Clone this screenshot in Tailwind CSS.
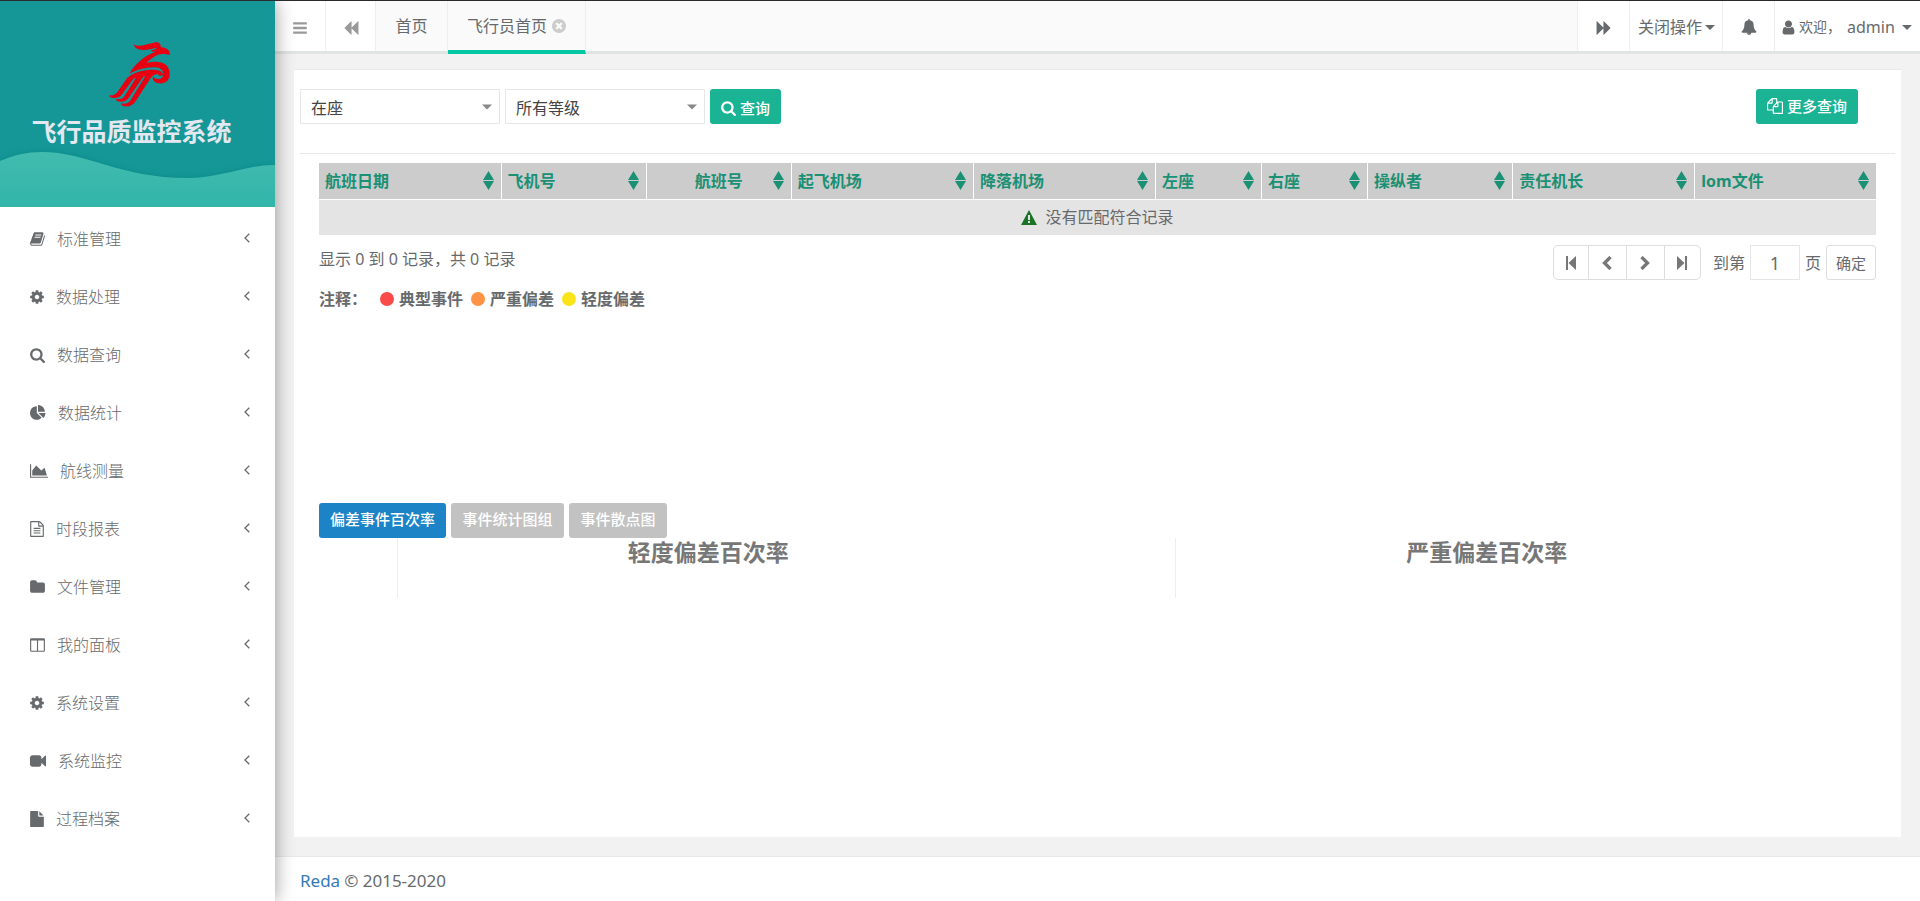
<!DOCTYPE html>
<html lang="zh-CN">
<head>
<meta charset="utf-8">
<meta name="viewport" content="width=device-width, initial-scale=1">
<title>飞行品质监控系统</title>
<script src="https://cdn.jsdelivr.net/npm/@tailwindcss/browser@4"></script>
</head>
<body class="flex min-h-screen border-t border-[#2a2a2e] bg-[#f2f2f2] font-['Noto_Sans','Noto_Sans_CJK_SC',sans-serif] text-base leading-6 text-[#676a6c]">

<svg class="hidden" aria-hidden="true">
  <symbol id="bars" viewBox="0 0 1792 1792"><path d="M1664 1344v128q0 26-19 45t-45 19h-1408q-26 0-45-19t-19-45v-128q0-26 19-45t45-19h1408q26 0 45 19t19 45zm0-512v128q0 26-19 45t-45 19h-1408q-26 0-45-19t-19-45v-128q0-26 19-45t45-19h1408q26 0 45 19t19 45zm0-512v128q0 26-19 45t-45 19h-1408q-26 0-45-19t-19-45v-128q0-26 19-45t45-19h1408q26 0 45 19t19 45z"/></symbol>
  <symbol id="backward" viewBox="0 0 1792 1792"><path d="M1683 141q19-19 32-13t13 32v1472q0 26-13 32t-32-13l-710-710q-9-9-13-19v710q0 26-13 32t-32-13l-710-710q-19-19-19-45t19-45l710-710q19-19 32-13t13 32v710q4-10 13-19z"/></symbol>
  <symbol id="book" viewBox="64 0 1664 1792"><path d="M1703 478q40 57 18 129l-275 906q-19 64-76.5 107.5t-122.5 43.5h-923q-77 0-148.5-53.5t-99.5-131.5q-24-67-2-127 0-4 3-27t4-37q1-8-3-21.5t-3-19.5q2-11 8-21t16.5-23.5 16.5-23.5q23-38 45-91.5t30-91.5q3-10 .5-30t-.5-28q3-11 17-28t17-23q21-36 42-92t25-90q1-9-2.5-32t.5-28q4-13 22-30.5t22-22.5q19-26 42.5-84.5t27.5-96.5q1-8-3-25.5t-2-26.5q2-8 9-18t18-23 17-21q8-12 16.5-30.5t15-35 16-36 19.5-32 26.5-23.5 36-11.5 47.5 5.5l-1 3q38-9 51-9h761q74 0 114 56t18 130l-274 906q-36 119-71.5 153.5t-128.5 34.5h-869q-27 0-38 15-11 16-1 43 24 70 144 70h923q29 0 56-15.5t35-41.5l300-987q7-22 5-57 38 15 59 43zm-1064 2q-4 13 2 22.5t20 9.5h608q13 0 25.5-9.5t16.5-22.5l21-64q4-13-2-22.5t-20-9.5h-608q-13 0-25.5 9.5t-16.5 22.5zm-83 256q-4 13 2 22.5t20 9.5h608q13 0 25.5-9.5t16.5-22.5l21-64q4-13-2-22.5t-20-9.5h-608q-13 0-25.5 9.5t-16.5 22.5z"/></symbol>
  <symbol id="cog" viewBox="128 0 1536 1792"><path d="M1152 896q0-106-75-181t-181-75-181 75-75 181 75 181 181 75 181-75 75-181zm512-109v222q0 12-8 23t-20 13l-185 28q-19 54-39 91 35 50 107 138 10 12 10 25t-9 23q-27 37-99 108t-94 71q-12 0-26-9l-138-108q-44 23-91 38-16 136-29 186-7 28-36 28h-222q-14 0-24.5-8.5t-11.5-21.5l-28-184q-49-16-90-37l-141 107q-10 9-25 9-14 0-25-11-126-114-165-168-7-10-7-23 0-12 8-23 15-21 51-66.5t54-70.5q-27-50-41-99l-183-27q-13-2-21-12.5t-8-23.5v-222q0-12 8-23t19-13l186-28q14-46 39-92-40-57-107-138-10-12-10-24 0-10 9-23 26-36 98.5-107.5t94.5-71.5q13 0 26 10l138 107q44-23 91-38 16-136 29-186 7-28 36-28h222q14 0 24.5 8.5t11.5 21.5l28 184q49 16 90 37l142-107q9-9 24-9 13 0 25 10 129 119 165 170 7 8 7 22 0 12-8 23-15 21-51 66.5t-54 70.5q26 50 41 98l183 28q13 2 21 12.5t8 23.5z"/></symbol>
  <symbol id="search" viewBox="64 0 1664 1792"><path d="M1216 832q0-185-131.5-316.5t-316.5-131.5-316.5 131.5-131.5 316.5 131.5 316.5 316.5 131.5 316.5-131.5 131.5-316.5zm512 832q0 52-38 90t-90 38q-54 0-90-38l-343-342q-179 124-399 124-143 0-273.5-55.5t-225-150-150-225-55.5-273.5 55.5-273.5 150-225 225-150 273.5-55.5 273.5 55.5 225 150 150 225 55.5 273.5q0 220-124 399l343 343q37 37 37 90z"/></symbol>
  <symbol id="pie" viewBox="0 0 1792 1792"><path d="M768 890l546 546q-106 108-247.5 168t-298.5 60q-209 0-385.5-103t-279.5-279.5-103-385.5 103-385.5 279.5-279.5 385.5-103v762zm187 6h773q0 157-60 298.5t-168 247.5zm709-128h-768v-768q209 0 385.5 103t279.5 279.5 103 385.5z"/></symbol>
  <symbol id="area" viewBox="0 0 2048 1792"><path d="M2048 1536v128h-2048v-1536h128v1408h1920zm-384-1024l256 896h-1664v-576l448-576 576 576z"/></symbol>
  <symbol id="filetext" viewBox="128 0 1536 1792"><path d="M1596 380q28 28 48 76t20 88v1152q0 40-28 68t-68 28h-1344q-40 0-68-28t-28-68v-1600q0-40 28-68t68-28h896q40 0 88 20t76 48zm-444-244v376h376q-10-29-22-41l-313-313q-12-12-41-22zm384 1528v-1024h-416q-40 0-68-28t-28-68v-416h-768v1536h1280zm-1024-864q0-14 9-23t23-9h704q14 0 23 9t9 23v64q0 14-9 23t-23 9h-704q-14 0-23-9t-9-23v-64zm736 224q14 0 23 9t9 23v64q0 14-9 23t-23 9h-704q-14 0-23-9t-9-23v-64q0-14 9-23t23-9h704zm0 256q14 0 23 9t9 23v64q0 14-9 23t-23 9h-704q-14 0-23-9t-9-23v-64q0-14 9-23t23-9h704z"/></symbol>
  <symbol id="folder" viewBox="64 0 1664 1792"><path d="M1728 608v704q0 92-66 158t-158 66h-1216q-92 0-158-66t-66-158v-960q0-92 66-158t158-66h320q92 0 158 66t66 158v32h672q92 0 158 66t66 158z"/></symbol>
  <symbol id="columns" viewBox="64 0 1664 1792"><path d="M224 1536h608v-1152h-640v1120q0 13 9.5 22.5t22.5 9.5zm1376-32v-1120h-640v1152h608q13 0 22.5-9.5t9.5-22.5zm128-1216v1216q0 66-47 113t-113 47h-1344q-66 0-113-47t-47-113v-1216q0-66 47-113t113-47h1344q66 0 113 47t47 113z"/></symbol>
  <symbol id="video" viewBox="0 0 1792 1792"><path d="M1792 352v1088q0 42-39 59-13 5-25 5-27 0-45-19l-403-403v166q0 119-84.5 203.5t-203.5 84.5h-704q-119 0-203.5-84.5t-84.5-203.5v-704q0-119 84.5-203.5t203.5-84.5h704q119 0 203.5 84.5t84.5 203.5v165l403-402q18-19 45-19 12 0 25 5 39 17 39 59z"/></symbol>
  <symbol id="file" viewBox="128 0 1536 1792"><path d="M1152 512v-472q22 14 36 28l408 408q14 14 28 36h-472zm-128 32q0 40 28 68t68 28h544v1056q0 40-28 68t-68 28h-1344q-40 0-68-28t-28-68v-1600q0-40 28-68t68-28h800v544z"/></symbol>
  <symbol id="bell" viewBox="0 0 1792 1792"><path d="M912 1696q0-16-16-16-59 0-101.5-42.5t-42.5-101.5q0-16-16-16t-16 16q0 73 51.5 124.5t124.5 51.5q16 0 16-16zm816-288q0 52-38 90t-90 38h-448q0 106-75 181t-181 75-181-75-75-181h-448q-52 0-90-38t-38-90q50-42 91-88t85-119.5 74.5-158.5 50-206 19.5-260q0-152 117-282.5t307-158.5q-8-19-8-39 0-40 28-68t68-28 68 28 28 68q0 20-8 39 190 28 307 158.5t117 282.5q0 139 19.5 260t50 206 74.5 158.5 85 119.5 91 88z"/></symbol>
  <symbol id="user" viewBox="192 0 1408 1792"><path d="M1536 1399q0 109-62.5 187t-150.5 78h-854q-88 0-150.5-78t-62.5-187q0-85 8.5-160.5t31.5-152 58.5-131 94-89 134.5-34.5q131 128 313 128t313-128q76 0 134.5 34.5t94 89 58.5 131 31.5 152 8.5 160.5zm-256-887q0 159-112.5 271.5t-271.5 112.5-271.5-112.5-112.5-271.5 112.5-271.5 271.5-112.5 271.5 112.5 112.5 271.5z"/></symbol>
  <symbol id="close" viewBox="128 128 1536 1536"><path d="M1277 1122q0-26-19-45l-181-181 181-181q19-19 19-45 0-27-19-46l-90-90q-19-19-46-19-26 0-45 19l-181 181-181-181q-19-19-45-19-27 0-46 19l-90 90q-19 19-19 46 0 26 19 45l181 181-181 181q-19 19-19 45 0 27 19 46l90 90q19 19 46 19 26 0 45-19l181-181 181 181q19 19 45 19 27 0 46-19l90-90q19-19 19-46zm387-226q0 209-103 385.5t-279.5 279.5-385.5 103-385.5-103-279.5-279.5-103-385.5 103-385.5 279.5-279.5 385.5-103 385.5 103 279.5 279.5 103 385.5z"/></symbol>
  <symbol id="files" viewBox="0 0 1792 1792"><path d="M1696 384q40 0 68 28t28 68v1216q0 40-28 68t-68 28h-960q-40 0-68-28t-28-68v-288h-544q-40 0-68-28t-28-68v-672q0-40 20-88t48-76l408-408q28-28 76-48t88-20h416q40 0 68 28t28 68v328q68-40 128-40h416zm-544 213l-299 299h299v-299zm-640-384l-299 299h299v-299zm196 647l316-316v-416h-384v416q0 40-28 68t-68 28h-416v640h512v-256q0-40 20-88t48-76zm956 804v-1152h-384v416q0 40-28 68t-68 28h-416v640h896z"/></symbol>
  <symbol id="caret" viewBox="0 0 10 5"><path d="M0 0h10L5 5z"/></symbol>
  <symbol id="left" viewBox="0 0 6 10"><path d="M5.300 .8L1 5l4.300 4.200" fill="none" stroke="currentColor" stroke-width="1.300"/></symbol>
  <symbol id="sort" viewBox="0 0 11 19"><path d="M5.500 0l5.500 9H0zM5.500 19l5.500-9H0z"/></symbol>
  <symbol id="chev" viewBox="0 0 10 14"><path d="M8.500 1L2.500 7l6 6" fill="none" stroke="currentColor" stroke-width="3.300"/></symbol>
  <symbol id="first" viewBox="0 0 10 14"><path d="M0 0h2v14H0zM10 0v14L2.500 7z"/></symbol>
</svg>

<aside class="relative z-10 w-[275px] shrink-0 bg-white shadow-[0_0_18px_rgba(0,0,0,0.4)]">
  <div class="relative h-[206px] overflow-hidden bg-[#159797]">
    <svg class="absolute inset-0 size-full" viewBox="0 0 275 206" preserveAspectRatio="none" aria-hidden="true">
      <defs>
        <linearGradient id="wave" x1="0" y1="0" x2="0" y2="1"><stop offset="0" stop-color="#41bbae"/><stop offset="1" stop-color="#33b5aa"/></linearGradient>
        <filter id="soft" x="-10%" y="-30%" width="120%" height="160%"><feGaussianBlur stdDeviation="3"/></filter>
      </defs>
      <path d="M0 160C14 154 27 151 42 151C87 151 120 177 187 177C221 177 250 163 275 164V206H0z" fill="#0b7f80" opacity=".55" filter="url(#soft)"/>
      <path d="M0 160C14 154 27 151 42 151C87 151 120 177 187 177C221 177 250 163 275 164V206H0z" fill="url(#wave)"/>
    </svg>
    <div class="relative flex flex-col items-center pt-10 pr-3">
      <svg class="ml-4 h-[66px] w-[62px]" viewBox="321 122 186 198" role="img" aria-label="标志">
        <path fill="#e60012" d="M395 132C410 142 430 133 460 126C470 124 478 131 476 141C490 141 504 147 504 164C494 161 480 159 468 163C455 167 443 178 434 188C450 183 470 183 484 189C500 196 506 214 502 230C498 246 482 252 467 248C456 245 450 237 453 229C461 238 476 238 482 229C488 218 482 206 468 202C440 198 405 208 383 220C393 198 425 166 464 153C456 156 449 154 447 149C455 150 460 148 465 142C442 146 404 160 395 132Z"/>
        <path fill="#e60012" d="M376 232C400 212 440 206 463 209C476 211 484 217 483 223C480 229 466 226 468 220C456 222 450 226 444 236L402 301C394 313 382 320 366 318C360 317 357 313 358 309C370 312 380 308 386 299L430 228L424 229L380 293C372 304 360 306 346 303C342 301 341 298 343 296C354 298 362 295 368 286L402 232L394 235L359 283C352 293 337 295 325 291C321 289 322 285 325 285C337 287 344 279 350 270Z"/>
      </svg>
      <h1 class="mt-1 text-[25px] leading-10 font-bold text-[#e2e7f0]">飞行品质监控系统</h1>
    </div>
  </div>
  <nav class="flex flex-col pt-[3px] font-light" aria-label="主菜单">
    <a href="#" class="flex h-[58px] items-center px-[30px]"><svg class="h-4 w-[15px] fill-current"><use href="#book"/></svg><span class="ml-3">标准管理</span><svg class="mb-[2px] ml-auto h-[10px] w-[6px] fill-current -mr-[5px]"><use href="#left"/></svg></a>
    <a href="#" class="flex h-[58px] items-center px-[30px]"><svg class="h-4 w-[14px] fill-current"><use href="#cog"/></svg><span class="ml-3">数据处理</span><svg class="mb-[2px] ml-auto h-[10px] w-[6px] fill-current -mr-[5px]"><use href="#left"/></svg></a>
    <a href="#" class="flex h-[58px] items-center px-[30px]"><svg class="h-4 w-[15px] fill-current"><use href="#search"/></svg><span class="ml-3">数据查询</span><svg class="mb-[2px] ml-auto h-[10px] w-[6px] fill-current -mr-[5px]"><use href="#left"/></svg></a>
    <a href="#" class="flex h-[58px] items-center px-[30px]"><svg class="h-4 w-4 fill-current"><use href="#pie"/></svg><span class="ml-3">数据统计</span><svg class="mb-[2px] ml-auto h-[10px] w-[6px] fill-current -mr-[5px]"><use href="#left"/></svg></a>
    <a href="#" class="flex h-[58px] items-center px-[30px]"><svg class="h-4 w-[18px] fill-current"><use href="#area"/></svg><span class="ml-3">航线测量</span><svg class="mb-[2px] ml-auto h-[10px] w-[6px] fill-current -mr-[5px]"><use href="#left"/></svg></a>
    <a href="#" class="flex h-[58px] items-center px-[30px]"><svg class="h-4 w-[14px] fill-current"><use href="#filetext"/></svg><span class="ml-3">时段报表</span><svg class="mb-[2px] ml-auto h-[10px] w-[6px] fill-current -mr-[5px]"><use href="#left"/></svg></a>
    <a href="#" class="flex h-[58px] items-center px-[30px]"><svg class="h-4 w-[15px] fill-current"><use href="#folder"/></svg><span class="ml-3">文件管理</span><svg class="mb-[2px] ml-auto h-[10px] w-[6px] fill-current -mr-[5px]"><use href="#left"/></svg></a>
    <a href="#" class="flex h-[58px] items-center px-[30px]"><svg class="h-4 w-[15px] fill-current"><use href="#columns"/></svg><span class="ml-3">我的面板</span><svg class="mb-[2px] ml-auto h-[10px] w-[6px] fill-current -mr-[5px]"><use href="#left"/></svg></a>
    <a href="#" class="flex h-[58px] items-center px-[30px]"><svg class="h-4 w-[14px] fill-current"><use href="#cog"/></svg><span class="ml-3">系统设置</span><svg class="mb-[2px] ml-auto h-[10px] w-[6px] fill-current -mr-[5px]"><use href="#left"/></svg></a>
    <a href="#" class="flex h-[58px] items-center px-[30px]"><svg class="h-4 w-4 fill-current"><use href="#video"/></svg><span class="ml-3">系统监控</span><svg class="mb-[2px] ml-auto h-[10px] w-[6px] fill-current -mr-[5px]"><use href="#left"/></svg></a>
    <a href="#" class="flex h-[58px] items-center px-[30px]"><svg class="h-4 w-[14px] fill-current"><use href="#file"/></svg><span class="ml-3">过程档案</span><svg class="mb-[2px] ml-auto h-[10px] w-[6px] fill-current -mr-[5px]"><use href="#left"/></svg></a>
  </nav>
</aside>

<div class="flex min-w-0 flex-1 flex-col">
  <header class="flex h-[53px] border-b-3 border-[#e0e5e3] bg-[#fafafa]">
    <button type="button" aria-label="菜单" class="flex w-[51px] items-center justify-center border-r border-[#eee] bg-white pt-1 text-[#999]"><svg class="size-4 fill-current"><use href="#bars"/></svg></button>
    <button type="button" aria-label="向左" class="flex w-[50px] items-center justify-center border-r border-[#eee] bg-white pt-1 text-[#999]"><svg class="size-4 fill-current"><use href="#backward"/></svg></button>
    <a href="#" class="flex w-[72px] items-center justify-center border-r border-[#eee]">首页</a>
    <div class="-mb-[3px] flex w-[138px] items-center justify-center gap-[5px] border-r border-b-4 border-r-[#eee] border-b-[#04c8a4]"><a href="#">飞行员首页</a><button type="button" aria-label="关闭" class="text-[#ccc]"><svg class="size-[14px] fill-current"><use href="#close"/></svg></button></div>
    <div class="ml-auto flex bg-white">
      <button type="button" aria-label="向右" class="flex w-[52px] items-center justify-center border-l border-[#eee] pt-1 pr-2"><svg class="ml-2 size-4 -scale-x-100 fill-current"><use href="#backward"/></svg></button>
      <button type="button" class="flex w-[93px] items-center gap-[3px] border-l border-[#eee] pt-[2px] pl-2">关闭操作<svg class="h-[5px] w-[10px] fill-current"><use href="#caret"/></svg></button>
      <button type="button" aria-label="通知" class="flex w-[52px] items-center justify-center border-l border-[#eee] pt-[2px]"><svg class="size-4 fill-current"><use href="#bell"/></svg></button>
      <button type="button" class="flex w-[146px] items-center border-l border-[#eee] pt-[2px] pl-[7px]"><svg class="h-[17px] w-[13px] fill-current"><use href="#user"/></svg><span class="ml-1 text-sm">欢迎，</span><span class="ml-[6px]">admin</span><svg class="ml-[7px] h-[5px] w-[10px] fill-current"><use href="#caret"/></svg></button>
    </div>
  </header>

  <main class="mx-[19px] mt-[15px] flex-1 border-t border-[#e7eaec] bg-white">
    <form class="mx-[6px] flex h-[84px] items-start gap-[5px] border-b border-[#e7eaec] pt-[19px]">
      <div class="relative w-[200px]">
        <select aria-label="座位" class="h-[35px] w-full appearance-none rounded-[1px] border border-[#e5e6e7] bg-white pt-[2px] pl-[10px] text-[#444]"><option>在座</option></select>
        <svg class="pointer-events-none absolute top-[15px] right-2 h-[6px] w-[10px] fill-[#888]"><use href="#caret"/></svg>
      </div>
      <div class="relative w-[200px]">
        <select aria-label="等级" class="h-[35px] w-full appearance-none rounded-[1px] border border-[#e5e6e7] bg-white pt-[2px] pl-[10px] text-[#444]"><option>所有等级</option></select>
        <svg class="pointer-events-none absolute top-[15px] right-2 h-[6px] w-[10px] fill-[#888]"><use href="#caret"/></svg>
      </div>
      <button type="submit" class="flex h-[35px] w-[71px] items-center justify-center gap-1 rounded-[3px] bg-[#1ab394] pt-[2px] text-[15px] font-medium text-white"><svg class="h-4 w-[15px] fill-current"><use href="#search"/></svg>查询</button>
      <button type="button" class="mr-[37px] ml-auto flex h-[35px] w-[102px] items-center justify-center gap-1 rounded-[3px] bg-[#1ab394] pb-[2px] text-[15px] font-medium text-white"><svg class="size-4 fill-current"><use href="#files"/></svg>更多查询</button>
    </form>

    <section class="mx-[25px] pt-[9px]">
      <div class="min-h-[340px]">
        <table class="w-full table-fixed border-collapse">
          <colgroup><col class="w-[182px]"><col class="w-[145px]"><col class="w-[145px]"><col class="w-[182px]"><col class="w-[182px]"><col class="w-[106px]"><col class="w-[106px]"><col class="w-[145px]"><col class="w-[182px]"><col class="w-[181px]"></colgroup>
          <thead>
            <tr class="h-9 border-b border-white bg-[#ccc] text-left text-[#1a9074]">
              <th class="border-r border-white pr-[7px] pl-[6px]"><div class="flex items-center justify-between">航班日期<svg class="h-[19px] w-[11px] fill-current"><use href="#sort"/></svg></div></th>
              <th class="border-r border-white pr-[7px] pl-[6px]"><div class="flex items-center justify-between">飞机号<svg class="h-[19px] w-[11px] fill-current"><use href="#sort"/></svg></div></th>
              <th class="border-r border-white pr-[7px] pl-[6px]"><div class="flex items-center"><span class="flex-1 pl-3 text-center">航班号</span><svg class="h-[19px] w-[11px] fill-current"><use href="#sort"/></svg></div></th>
              <th class="border-r border-white pr-[7px] pl-[6px]"><div class="flex items-center justify-between">起飞机场<svg class="h-[19px] w-[11px] fill-current"><use href="#sort"/></svg></div></th>
              <th class="border-r border-white pr-[7px] pl-[6px]"><div class="flex items-center justify-between">降落机场<svg class="h-[19px] w-[11px] fill-current"><use href="#sort"/></svg></div></th>
              <th class="border-r border-white pr-[7px] pl-[6px]"><div class="flex items-center justify-between">左座<svg class="h-[19px] w-[11px] fill-current"><use href="#sort"/></svg></div></th>
              <th class="border-r border-white pr-[7px] pl-[6px]"><div class="flex items-center justify-between">右座<svg class="h-[19px] w-[11px] fill-current"><use href="#sort"/></svg></div></th>
              <th class="border-r border-white pr-[7px] pl-[6px]"><div class="flex items-center justify-between">操纵者<svg class="h-[19px] w-[11px] fill-current"><use href="#sort"/></svg></div></th>
              <th class="border-r border-white pr-[7px] pl-[6px]"><div class="flex items-center justify-between">责任机长<svg class="h-[19px] w-[11px] fill-current"><use href="#sort"/></svg></div></th>
              <th class="pr-[7px] pl-[6px]"><div class="flex items-center justify-between">lom文件<svg class="h-[19px] w-[11px] fill-current"><use href="#sort"/></svg></div></th>
            </tr>
          </thead>
          <tbody>
            <tr class="h-9 bg-[#e4e4e4]"><td colspan="10"><div class="flex items-center justify-center gap-2"><svg class="h-[15px] w-4" viewBox="0 0 16 15"><path d="M8 0l8 15H0z" fill="#1a7428"/><path d="M7 5h2v5H7zM7 11h2v2H7z" fill="#e4e4e4"/></svg>没有匹配符合记录</div></td></tr>
          </tbody>
        </table>
        <div class="flex items-start justify-between pt-[10px]">
          <div>
            <p class="pt-[2px]">显示 0 到 0 记录，共 0 记录</p>
            <div class="flex items-center pt-4 font-bold">注释：<span class="ml-[13px] size-[14px] rounded-full bg-[#fa4a4a]"></span><span class="ml-[5px]">典型事件</span><span class="ml-2 size-[14px] rounded-full bg-[#ff9447]"></span><span class="ml-[5px]">严重偏差</span><span class="ml-2 size-[14px] rounded-full bg-[#fae319]"></span><span class="ml-[5px]">轻度偏差</span></div>
          </div>
          <div class="flex items-center">
            <div class="flex h-[35px] divide-x divide-[#ddd] rounded-[5px] border border-[#ddd] text-[#777]">
              <button type="button" aria-label="首页" class="flex w-[35px] items-center justify-center"><svg class="h-[14px] w-[10px] fill-current"><use href="#first"/></svg></button>
              <button type="button" aria-label="上一页" class="flex w-[38px] items-center justify-center"><svg class="h-[14px] w-[10px]"><use href="#chev"/></svg></button>
              <button type="button" aria-label="下一页" class="flex w-[38px] items-center justify-center"><svg class="h-[14px] w-[10px] -scale-x-100"><use href="#chev"/></svg></button>
              <button type="button" aria-label="末页" class="flex w-[35px] items-center justify-center"><svg class="h-[14px] w-[10px] -scale-x-100 fill-current"><use href="#first"/></svg></button>
            </div>
            <label for="page" class="ml-3">到第</label>
            <input id="page" type="text" value="1" class="mx-[5px] h-[35px] w-[50px] border border-[#e5e6e7] text-center text-lg">
            <span>页</span>
            <button type="button" class="ml-[5px] h-[35px] w-[50px] rounded-[3px] border border-[#ddd] text-[15px]">确定</button>
          </div>
        </div>
      </div>

      <div class="flex gap-[5px] text-[15px] font-medium text-white">
        <button type="button" class="h-[35px] w-[127px] rounded-[3px] bg-[#1c84c6] pb-1">偏差事件百次率</button>
        <button type="button" class="h-[35px] w-[113px] rounded-[3px] bg-[#c2c2c2] pb-1">事件统计图组</button>
        <button type="button" class="h-[35px] w-[98px] rounded-[3px] bg-[#c2c2c2] pb-1">事件散点图</button>
      </div>
      <div class="grid grid-cols-2">
        <div class="relative h-[60px] text-center"><div class="absolute inset-y-0 left-[10%] w-px bg-[#eee]"></div><h2 class="text-[23px] leading-7 font-bold text-[#777]">轻度偏差百次率</h2></div>
        <div class="relative h-[60px] text-center"><div class="absolute inset-y-0 left-[10%] w-px bg-[#eee]"></div><h2 class="text-[23px] leading-7 font-bold text-[#777]">严重偏差百次率</h2></div>
      </div>
    </section>
  </main>

  <footer class="mt-[19px] flex h-[45px] items-center gap-1 border-t border-[#e7eaec] bg-white pt-1 pl-[25px] text-[17px]"><a href="#" class="text-[#337ab7]">Reda</a> © 2015-2020</footer>
</div>
</body>
</html>
